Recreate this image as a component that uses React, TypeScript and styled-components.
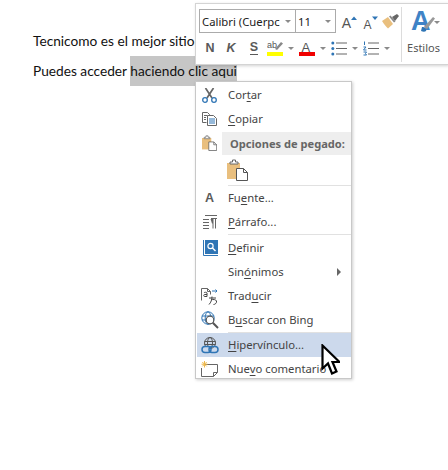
import * as React from 'react';
import styled, { createGlobalStyle } from 'styled-components';

const Global = createGlobalStyle`
  html, body { margin: 0; padding: 0; background: #fff; }
  body { width: 448px; height: 470px; overflow: hidden; font-family: "Noto Sans", "Open Sans", sans-serif; }
`;

const Page = styled.div`
  position: relative;
  width: 448px;
  height: 470px;
  overflow: hidden;
  background: #fff;
`;

const Doc = styled.div`
  display: flex;
  flex-direction: column;
  gap: 11px;
  padding: 31px 0 0 33px;
  font-family: Lato, "Open Sans", sans-serif;
  font-size: 13.7px;
  line-height: 19px;
  color: #111;
`;

const Line = styled.div`
  white-space: nowrap;
  height: 19px;
`;

const Selected = styled.span`
  display: inline-block;
  background: #c6c6c6;
  height: 30px;
  margin-top: -5px;
  padding: 5px 0 0;
  box-sizing: border-box;
  vertical-align: top;
`;

const Toolbar = styled.div`
  position: absolute;
  left: 195px;
  top: 3px;
  width: 252px;
  height: 60px;
  display: flex;
  background: #fff;
  border: 1px solid #d4d4d4;
  border-right: 0;
  box-shadow: 1px 1px 3px rgba(0, 0, 0, 0.18);
`;

const ToolCol = styled.div`
  width: 205px;
  display: flex;
  flex-direction: column;
`;

const ToolRow = styled.div`
  display: flex;
  align-items: center;
`;

const TopRow = styled(ToolRow)`
  padding: 5px 0 0 3px;
`;

const BottomRow = styled(ToolRow)`
  padding: 7px 0 0 0;
`;

const Combo = styled.div<{ $w: number }>`
  width: ${p => p.$w}px;
  height: 24px;
  box-sizing: border-box;
  border: 1px solid #ababab;
  margin-right: -1px;
  display: flex;
  align-items: center;
  justify-content: space-between;
  padding: 0 4px 0 2px;
  font-size: 11.3px;
  color: #222;
  white-space: nowrap;
  overflow: hidden;
`;

const Caret = styled.span<{ $c?: string }>`
  flex: none;
  width: 0;
  height: 0;
  border-left: 3px solid transparent;
  border-right: 3px solid transparent;
  border-top: 3px solid ${p => p.$c || '#8a8a8a'};
`;

const IconSlot = styled.div<{ $w: number; $ml?: number }>`
  width: ${p => p.$w}px;
  margin-left: ${p => p.$ml || 0}px;
  flex: none;
  display: flex;
  align-items: center;
  justify-content: center;
`;

const FormatLetter = styled.span<{ $u?: boolean; $i?: boolean }>`
  font-family: "Liberation Sans", Arial, sans-serif;
  font-weight: 700;
  font-size: 12.5px;
  color: #5a5a5a;
  font-style: ${p => (p.$i ? 'italic' : 'normal')};
  border-bottom: ${p => (p.$u ? '1.5px solid #5a5a5a' : '0')};
  line-height: 13px;
`;

const SizeLetterBox = styled.div`
  display: flex;
  align-items: flex-start;
  height: 17px;
  padding-top: 3px;
  box-sizing: border-box;
`;

const SizeLetter = styled.span<{ $size: number }>`
  font-family: "Liberation Sans", Arial, sans-serif;
  font-size: ${p => p.$size}px;
  line-height: 14px;
  margin-top: ${p => 14 - p.$size}px;
  color: #555;
`;

const Divider = styled.div`
  width: 1px;
  height: 55px;
  margin-top: 3px;
  background: #dcdcdc;
`;

const Styles = styled.div`
  flex: 1;
  display: flex;
  flex-direction: column;
  align-items: center;
  padding: 5px 3px 0 0;
`;

const StylesIcon = styled.div`
  position: relative;
  height: 26px;
  width: 29px;
  margin-left: 4px;
  display: flex;
  align-items: center;
  justify-content: flex-end;
`;

const StylesLetter = styled.span`
  position: absolute;
  left: 0;
  top: -1px;
  font-family: "Liberation Sans", Arial, sans-serif;
  font-weight: 700;
  font-size: 27px;
  line-height: 26px;
  color: #3f83c6;
`;

const StylesBrush = styled.svg`
  position: absolute;
  left: 10px;
  top: 4px;
`;

const StylesLabel = styled.div`
  font-size: 11px;
  color: #555;
  margin-top: 5px;
  line-height: 15px;
`;

const Menu = styled.div`
  position: absolute;
  left: 195px;
  top: 81px;
  width: 157px;
  height: 298px;
  box-sizing: border-box;
  padding: 1px 0 0 1px;
  background: #fff;
  border: 1px solid #c8c8c8;
  box-shadow: 1px 1px 3px rgba(0, 0, 0, 0.2);
  display: flex;
  flex-direction: column;
  font-size: 11.3px;
  color: #444;
`;

const Row = styled.div<{ $active?: boolean }>`
  height: 24px;
  flex: none;
  display: flex;
  align-items: center;
  background: ${p => (p.$active ? '#ccd9ec' : 'transparent')};
  position: relative;
`;

const RowIcon = styled.div<{ $mr?: number }>`
  width: 25px;
  flex: none;
  margin-right: ${p => p.$mr ?? 6}px;
  display: flex;
  justify-content: center;
  align-items: center;
`;

const Label = styled.span`
  white-space: nowrap;
  line-height: 16px;
  u { text-underline-offset: 2px; text-decoration-thickness: 1px; }
`;

const PasteHeader = styled.div`
  flex: 1;
  height: 23px;
  background: #eeeeee;
  display: flex;
  align-items: center;
  padding-left: 8px;
  font-weight: 700;
  font-size: 11.1px;
  color: #666;
  white-space: nowrap;
`;

const PasteRow = styled.div`
  height: 30px;
  flex: none;
  display: flex;
  align-items: center;
  padding-left: 30px;
`;

const Sep = styled.div<{ $mb?: number }>`
  height: 1px;
  flex: none;
  margin: 0 0 ${p => p.$mb || 0}px 31px;
  background: #e1e1e1;
`;

const Arrow = styled.span`
  position: absolute;
  right: 10px;
  top: 8px;
  width: 0;
  height: 0;
  border-top: 4px solid transparent;
  border-bottom: 4px solid transparent;
  border-left: 4px solid #666;
`;

const Pointer = styled.svg`
  position: absolute;
  left: 321px;
  top: 344px;
`;

const Scissors = () => (
  <svg width="15" height="15" viewBox="0 0 15 15">
    <path d="M3.500 0l6.500 10M11.500 0L5 10" stroke="#666" strokeWidth="1.700" fill="none" />
    <circle cx="3" cy="12" r="2.300" fill="none" stroke="#2f75b5" strokeWidth="1.300" />
    <circle cx="12" cy="12" r="2.300" fill="none" stroke="#2f75b5" strokeWidth="1.300" />
  </svg>
);

const CopyIcon = () => (
  <svg width="15" height="14" viewBox="0 0 15 14">
    <path d="M.5.5h5l2 2v1M.5.5v10h4" fill="#fff" stroke="#666" />
    <path d="M2 3.500h3M2 5.500h2M2 7.500h2" stroke="#666" />
    <path d="M5.500 3.500h6l3 3v7h-9z" fill="#fff" stroke="#666" />
    <path d="M7 7h6M7 9h6M7 11h6" stroke="#2f75b5" />
  </svg>
);

const PasteIcon = ({ big }: { big?: boolean }) => (
  <svg width={big ? 21 : 15} height={big ? 22 : 16} viewBox="0 0 21 22">
    <path d="M0 4h13v16H0z" fill="#e9bf7e" />
    <path d="M3 5V3h2.500V1h3v2H11v2z" fill="#fff" stroke="#666" />
    <path d="M9.500 9.500h7l4 4v8h-11z" fill="#fff" stroke="#555" />
    <path d="M16.500 9.500v4h4" fill="none" stroke="#555" />
  </svg>
);

const ParagraphIcon = () => (
  <svg width="15" height="14" viewBox="0 0 15 14">
    <path d="M3 .5h12M1 4.500h6M1 7.500h6M1 10.500h6M1 13.500h6" stroke="#666" />
    <path d="M9 3.500h6M11 3.500v10M13.500 3.500v10" stroke="#666" fill="none" />
    <path d="M8.500 4h2.500v4.500H10z" fill="#666" />
  </svg>
);

const DefineIcon = () => (
  <svg width="16" height="16" viewBox="0 0 16 16">
    <path d="M1.500 0v15.500H16" fill="none" stroke="#2f75b5" />
    <path d="M3 0h13v14H3z" fill="#2f75b5" />
    <circle cx="8.500" cy="6" r="2.600" fill="#2f75b5" stroke="#fff" strokeWidth="1.200" />
    <path d="M10.500 8l3 3" stroke="#fff" strokeWidth="1.400" />
  </svg>
);

const TranslateIcon = () => (
  <svg width="17" height="17" viewBox="0 0 17 17">
    <path d="M.5 12.500V.5h6l3 3v3" fill="#fff" stroke="#666" />
    <path d="M6.500.5v3h3" fill="none" stroke="#666" />
    <path d="M3 5c0-1 3-1 3 0v3.500M6 6.500H3.500c-1 0-1 2 0 2H6" fill="none" stroke="#444" />
    <path d="M8 10h7M11 8.500c0 3-1 6-3 8M10 12c2-1 5-.5 5.500 1 .5 2-1.500 3.500-3 3.500" fill="none" stroke="#444" />
    <path d="M11 3h5l-1.500-1.500M16 3l-1.500 1.500" fill="none" stroke="#2f75b5" />
  </svg>
);

const SearchGlobeIcon = () => (
  <svg width="18" height="18" viewBox="0 0 18 18">
    <circle cx="7" cy="7" r="6.200" fill="#fff" stroke="#2f75b5" />
    <ellipse cx="7" cy="7" rx="2.800" ry="6.200" fill="none" stroke="#2f75b5" />
    <path d="M1 5h12M1 9h12" stroke="#2f75b5" />
    <circle cx="9" cy="9" r="3.800" fill="#fff" stroke="#555" strokeWidth="1.200" />
    <path d="M11.800 11.800L17 17" stroke="#555" strokeWidth="2" />
  </svg>
);

const LinkIcon = () => (
  <svg width="18" height="17" viewBox="0 0 18 17">
    <circle cx="9" cy="6" r="5.500" fill="none" stroke="#555" />
    <ellipse cx="9" cy="6" rx="2.500" ry="5.500" fill="none" stroke="#555" />
    <path d="M3.500 4.500h11M3.500 7.500h11" stroke="#555" />
    <rect x="1" y="9.500" width="9" height="6" rx="3" fill="#ccd9ec" stroke="#2f75b5" strokeWidth="1.500" />
    <rect x="8" y="9.500" width="9" height="6" rx="3" fill="none" stroke="#2f75b5" strokeWidth="1.500" />
  </svg>
);

const CommentIcon = () => (
  <svg width="17" height="16" viewBox="0 0 17 16">
    <path d="M3.500 3.500h13v8l-4 4h-12V7" fill="#fff" stroke="#666" />
    <path d="M12.500 15.500v-4h4" fill="none" stroke="#666" />
    <path d="M3.500 0v6.500M.5 3.200h6M1.300 1l4.400 4.400M5.700 1L1.300 5.400" stroke="#eeb84a" strokeWidth="1" />
  </svg>
);

const SizeArrow = ({ up }: { up?: boolean }) => (
  <svg width="6" height="5" viewBox="0 0 6 5">
    <path d={up ? 'M0 4l3-3.500L6 4z' : 'M0 .5h6L3 4z'} fill="#2f75b5" />
  </svg>
);

const BrushIcon = () => (
  <svg width="17" height="15" viewBox="0 0 17 15">
    <path d="M0 7l6-4 5 7-5 4.500C4 13 2 10 0 7z" fill="#e9bf7e" />
    <path d="M7 2.500l5 6 1.500-1-5-6z" fill="#888" />
    <path d="M10 3l5-3 2 2-4 5z" fill="#666" />
  </svg>
);

const HighlightIcon = () => (
  <svg width="16" height="16" viewBox="0 0 16 16">
    <text x="0" y="8" fontFamily="Liberation Sans" fontSize="9" fill="#555">ab</text>
    <path d="M8 9l6-7 2 1.500L10 10z" fill="#888" />
    <rect y="12" width="16" height="4" fill="#ffff00" />
  </svg>
);

const ColorA = () => (
  <svg width="16" height="16" viewBox="0 0 16 16">
    <text x="2.500" y="11.500" fontFamily="Liberation Sans" fontSize="13" fill="#555">A</text>
    <rect y="12" width="16" height="4" fill="#f00000" />
  </svg>
);

const Bullets = () => (
  <svg width="16" height="15" viewBox="0 0 16 15">
    <circle cx="1.800" cy="2" r="1.500" fill="#2f75b5" />
    <circle cx="1.800" cy="7.500" r="1.500" fill="#2f75b5" />
    <circle cx="1.800" cy="13" r="1.500" fill="#2f75b5" />
    <path d="M5 2h11M5 7.500h11M5 13h11" stroke="#666" />
  </svg>
);

const Numbers = () => (
  <svg width="16" height="15" viewBox="0 0 16 15">
    <path d="M1.500.5v3.500M.5 6h2.500L.5 9h3M.5 11h3l-1 1.500 1 1.500h-3" stroke="#2f75b5" fill="none" strokeWidth="1" />
    <path d="M5 2h11M5 7.500h11M5 13h11" stroke="#666" />
  </svg>
);

export default function App() {
  return (
    <Page>
      <Global />
      <Doc>
        <Line>Tecnicomo es el mejor sitio</Line>
        <Line>Puedes acceder <Selected>haciendo clic aqui</Selected></Line>
      </Doc>

      <Toolbar>
        <ToolCol>
          <TopRow>
            <Combo $w={97}>Calibri (Cuerpc <Caret /></Combo>
            <Combo $w={41}>11 <Caret /></Combo>
            <IconSlot $w={17} $ml={6}>
              <SizeLetterBox><SizeLetter $size={14}>A</SizeLetter><SizeArrow up /></SizeLetterBox>
            </IconSlot>
            <IconSlot $w={17} $ml={4}>
              <SizeLetterBox><SizeLetter $size={12}>A</SizeLetter><SizeArrow /></SizeLetterBox>
            </IconSlot>
            <IconSlot $w={17} $ml={3}><BrushIcon /></IconSlot>
          </TopRow>
          <BottomRow>
            <IconSlot $w={14} $ml={7}><FormatLetter>N</FormatLetter></IconSlot>
            <IconSlot $w={14} $ml={7}><FormatLetter $i>K</FormatLetter></IconSlot>
            <IconSlot $w={14} $ml={9}><FormatLetter $u>S</FormatLetter></IconSlot>
            <IconSlot $w={16} $ml={6}><HighlightIcon /></IconSlot>
            <IconSlot $w={6} $ml={5}><Caret /></IconSlot>
            <IconSlot $w={16} $ml={5}><ColorA /></IconSlot>
            <IconSlot $w={6} $ml={5}><Caret /></IconSlot>
            <IconSlot $w={16} $ml={5}><Bullets /></IconSlot>
            <IconSlot $w={6} $ml={5}><Caret /></IconSlot>
            <IconSlot $w={16} $ml={5}><Numbers /></IconSlot>
            <IconSlot $w={6} $ml={5}><Caret /></IconSlot>
          </BottomRow>
        </ToolCol>
        <Divider />
        <Styles>
          <StylesIcon>
            <StylesLetter>A</StylesLetter>
            <StylesBrush width="15" height="20" viewBox="0 0 15 20">
              <path d="M3 14L12 4l2 1.500L6 16z" fill="#999" />
              <path d="M1 14c3 0 5 2 4 4-1 1-3 1-5 0z" fill="#2f75b5" />
            </StylesBrush>
            <Caret />
          </StylesIcon>
          <StylesLabel>Estilos</StylesLabel>
        </Styles>
      </Toolbar>

      <Menu>
        <Row><RowIcon><Scissors /></RowIcon><Label>Cor<u>t</u>ar</Label></Row>
        <Row><RowIcon><CopyIcon /></RowIcon><Label><u>C</u>opiar</Label></Row>
        <Row><RowIcon $mr={0}><PasteIcon /></RowIcon><PasteHeader>Opciones de pegado:</PasteHeader></Row>
        <PasteRow><PasteIcon big /></PasteRow>
        <Sep />
        <Row><RowIcon><FormatLetter>A</FormatLetter></RowIcon><Label>Fu<u>e</u>nte...</Label></Row>
        <Row><RowIcon><ParagraphIcon /></RowIcon><Label><u>P</u>árrafo...</Label></Row>
        <Sep $mb={1} />
        <Row><RowIcon><DefineIcon /></RowIcon><Label><u>D</u>efinir</Label></Row>
        <Row><RowIcon /><Label>Sin<u>ó</u>nimos</Label><Arrow /></Row>
        <Row><RowIcon><TranslateIcon /></RowIcon><Label>Trad<u>u</u>cir</Label></Row>
        <Row><RowIcon><SearchGlobeIcon /></RowIcon><Label>B<u>u</u>scar con Bing</Label></Row>
        <Sep />
        <Row $active><RowIcon><LinkIcon /></RowIcon><Label><u>H</u>ipervínculo...</Label></Row>
        <Row><RowIcon><CommentIcon /></RowIcon><Label>Nue<u>v</u>o comentario</Label></Row>
      </Menu>

      <Pointer width="19" height="32" viewBox="0 0 19 32">
        <path d="M1.500 1.500v23l5.500-5 4 10 4.500-2-4-9.500h7z" fill="#fff" stroke="#000" strokeWidth="2.200" strokeLinejoin="miter" />
      </Pointer>
    </Page>
  );
}
